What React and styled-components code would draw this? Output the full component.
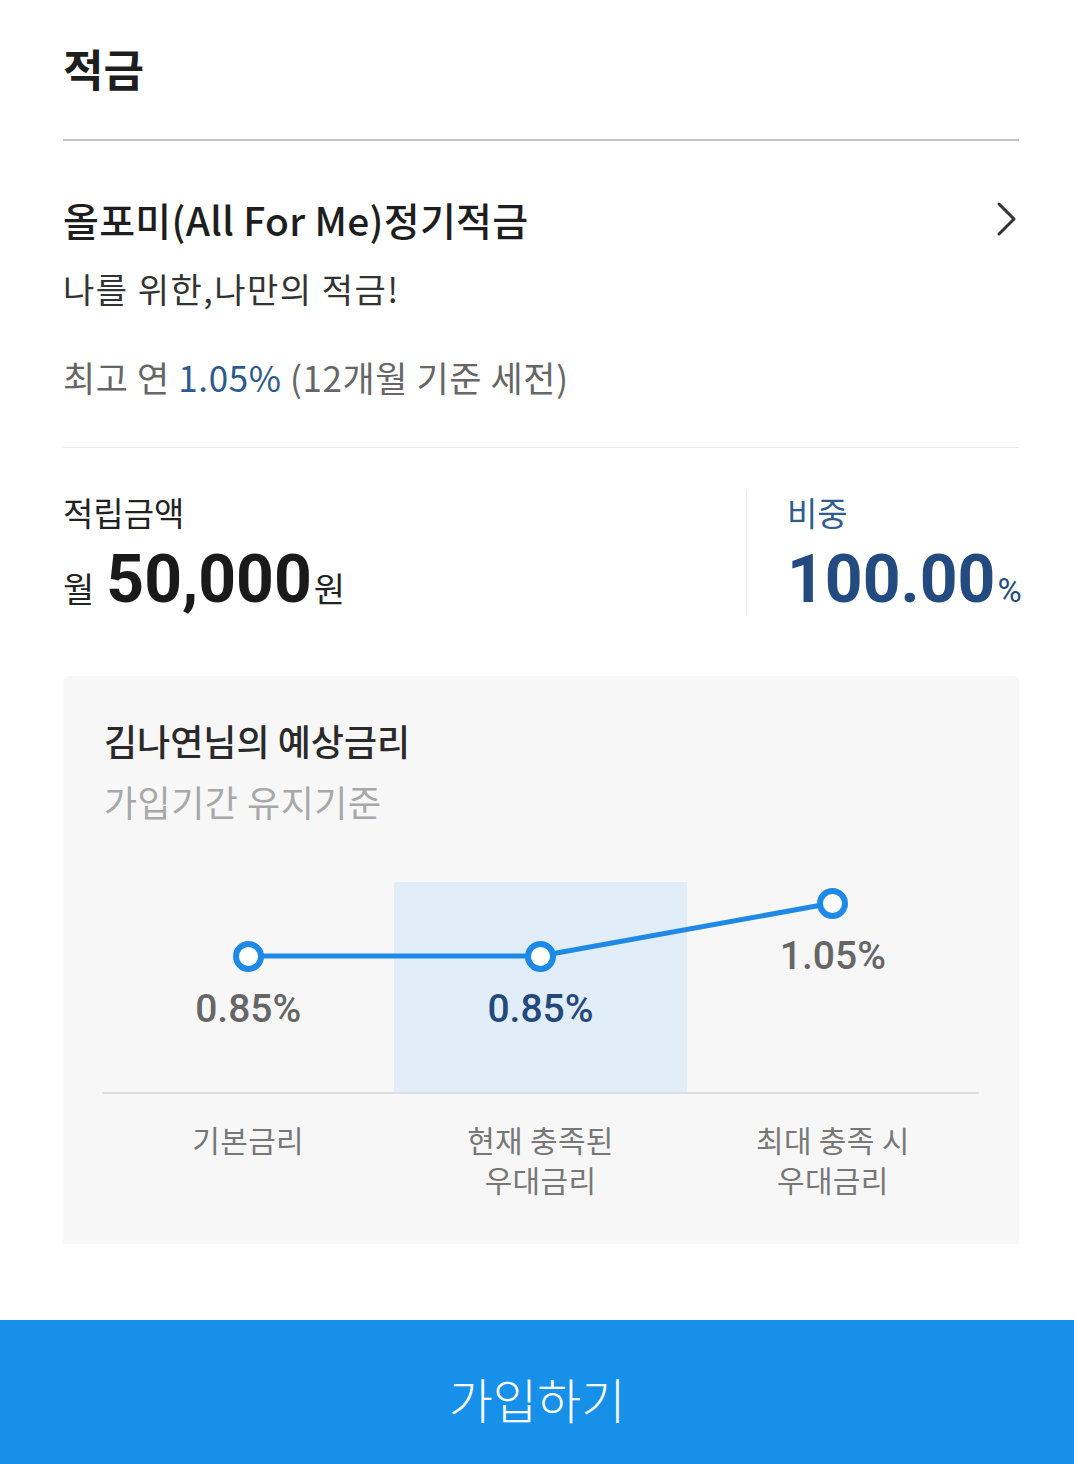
import styled, { createGlobalStyle } from "styled-components";

const GlobalStyle = createGlobalStyle`
  html, body {
    margin: 0;
    padding: 0;
    background: #fff;
  }
  body {
    font-family: "Noto Sans CJK KR", "Noto Sans", sans-serif;
    color: #222;
  }
`;

const NUM_FONT = `Roboto, "Noto Sans CJK KR", sans-serif`;

// 차트 데이터
const rates = [
  { label: ["기본금리"], value: "0.85%", top: 59, current: false },
  { label: ["현재 충족된", "우대금리"], value: "0.85%", top: 59, current: true },
  { label: ["최대 충족 시", "우대금리"], value: "1.05%", top: 6, current: false },
];

function App() {
  return (
    <Screen>
      <GlobalStyle />
      <Content>
        <PageHeader>
          <PageTitle>적금</PageTitle>
        </PageHeader>

        <ProductSection>
          <ProductRow>
            <ProductName>올포미(All For Me)정기적금</ProductName>
            <Chevron width="22" height="36" viewBox="0 0 22 36">
              <polyline points="3,3 18,18 3,33" />
            </Chevron>
          </ProductRow>
          <ProductDesc>나를 위한,나만의 적금!</ProductDesc>
          <RateLine>
            최고 연 <RateHighlight>1.05%</RateHighlight> (12개월 기준 세전)
          </RateLine>
        </ProductSection>

        <AmountSection>
          <AmountCol>
            <AmountLabel>적립금액</AmountLabel>
            <AmountValue>
              <Unit>월</Unit>
              <BigNumber>50,000</BigNumber>
              <Unit tight>원</Unit>
            </AmountValue>
          </AmountCol>
          <RatioCol>
            <RatioLabel>비중</RatioLabel>
            <AmountValue>
              <BigNumber blue>100.00</BigNumber>
              <Percent>%</Percent>
            </AmountValue>
          </RatioCol>
        </AmountSection>

        <RateCard>
          <CardTitle>김나연님의 예상금리</CardTitle>
          <CardSub>가입기간 유지기준</CardSub>

          <Plot>
            <LineLayer width="877" height="210" viewBox="0 0 877 210">
              <polyline points="146,74 438,74 731,21" />
            </LineLayer>
            {rates.map((r, i) => (
              <PlotCol key={i} $current={r.current} $top={r.top}>
                <Dot />
                <PlotValue $current={r.current}>{r.value}</PlotValue>
              </PlotCol>
            ))}
          </Plot>
          <Axis>
            {rates.map((r, i) => (
              <AxisLabel key={i}>
                {r.label.map((line) => (
                  <div key={line}>{line}</div>
                ))}
              </AxisLabel>
            ))}
          </Axis>
        </RateCard>
      </Content>

      <JoinButton>가입하기</JoinButton>
    </Screen>
  );
}

export default App;

const Screen = styled.div`
  display: flex;
  flex-direction: column;
  min-height: 1464px;
  background: #fff;
`;

const Content = styled.div`
  flex: 1;
  padding: 0 55px 0 63px;
`;

const PageHeader = styled.header`
  box-sizing: border-box;
  height: 141px;
  padding-top: 42px;
  border-bottom: 2px solid #c4c4c4;
`;

const PageTitle = styled.h1`
  margin: 0;
  font-size: 44px;
  line-height: 52px;
  font-weight: 700;
  color: #1e1e1e;
`;

const ProductSection = styled.section`
  padding-top: 54px;
  padding-bottom: 48px;
  border-bottom: 1px solid #ececec;
`;

const ProductRow = styled.div`
  display: flex;
  align-items: center;
  justify-content: space-between;
`;

const ProductName = styled.h2`
  margin: 0;
  font-size: 39px;
  line-height: 48px;
  font-weight: 500;
  color: #1e1e1e;
  letter-spacing: 0.3px;
`;

const Chevron = styled.svg`
  margin-right: 1px;
  fill: none;
  stroke: #333;
  stroke-width: 3;
  stroke-linecap: round;
  stroke-linejoin: round;
`;

const ProductDesc = styled.p`
  margin: 24px 0 0;
  font-size: 34px;
  line-height: 44px;
  color: #333;
  letter-spacing: 1.5px;
`;

const RateLine = styled.p`
  margin: 44px 0 0;
  font-size: 35px;
  line-height: 44px;
  color: #666;
  letter-spacing: 0.6px;
`;

const RateHighlight = styled.span`
  color: #2b5a8f;
`;

const AmountSection = styled.section`
  display: flex;
  padding-top: 42px;
  padding-bottom: 60px;
`;

const AmountCol = styled.div`
  flex: 1;
  border-right: 1px solid #ececec;
`;

const RatioCol = styled.div`
  width: 232px;
  padding-left: 40px;
`;

const AmountLabel = styled.div`
  font-size: 33px;
  line-height: 44px;
  color: #222;
`;

const RatioLabel = styled(AmountLabel)`
  color: #2f5d91;
`;

const AmountValue = styled.div`
  display: flex;
  align-items: baseline;
  height: 72px;
  margin-top: 10px;
`;

const Unit = styled.span`
  font-size: 34px;
  color: #222;
  margin-right: ${(p) => (p.tight ? "0" : "12px")};
  margin-left: ${(p) => (p.tight ? "2px" : "0")};
`;

const BigNumber = styled.span`
  font-family: ${NUM_FONT};
  font-size: 66px;
  line-height: 72px;
  font-weight: 700;
  color: ${(p) => (p.blue ? "#234b7f" : "#1a1a1a")};
`;

const Percent = styled.span`
  font-family: ${NUM_FONT};
  font-size: 33px;
  color: #234b7f;
  margin-left: 2px;
`;

const RateCard = styled.section`
  background: #f7f7f7;
  border-radius: 6px 6px 0 0;
  padding: 40px 40px 45px 39px;
`;

const CardTitle = styled.h3`
  margin: 0 0 0 2px;
  font-size: 36px;
  line-height: 48px;
  font-weight: 500;
  color: #2a2a2a;
`;

const CardSub = styled.div`
  margin: 14px 0 0 2px;
  font-size: 36px;
  line-height: 46px;
  color: #a8a8a8;
  letter-spacing: 0.5px;
`;

const Plot = styled.div`
  position: relative;
  display: grid;
  grid-template-columns: repeat(3, 1fr);
  height: 210px;
  margin-top: 58px;
  border-bottom: 2px solid #dedede;
`;

const LineLayer = styled.svg`
  position: absolute;
  left: 0;
  top: 0;
  z-index: 1;
  fill: none;
  stroke: #1e8ae6;
  stroke-width: 5;
  stroke-linejoin: round;
`;

const PlotCol = styled.div`
  display: flex;
  flex-direction: column;
  align-items: center;
  padding-top: ${(p) => p.$top}px;
  background: ${(p) => (p.$current ? "#e1edf8" : "transparent")};
`;

const Dot = styled.div`
  position: relative;
  z-index: 2;
  box-sizing: border-box;
  width: 31px;
  height: 31px;
  border-radius: 50%;
  border: 6px solid #1e8ae6;
  background: #fff;
`;

const PlotValue = styled.div`
  margin-top: 15px;
  font-family: ${NUM_FONT};
  font-size: 39px;
  line-height: 44px;
  font-weight: 500;
  color: ${(p) => (p.$current ? "#24497c" : "#666")};
`;

const Axis = styled.div`
  display: grid;
  grid-template-columns: repeat(3, 1fr);
  padding-top: 25px;
`;

const AxisLabel = styled.div`
  text-align: center;
  font-size: 30px;
  line-height: 40px;
  color: #777;
  letter-spacing: 0.3px;
`;

const JoinButton = styled.button`
  height: 144px;
  width: 100%;
  border: 0;
  margin: 0;
  padding: 12px 0 0;
  background: #1790ea;
  color: #fff;
  font-family: "Noto Sans CJK KR", sans-serif;
  font-size: 48px;
  font-weight: 300;
  cursor: pointer;
`;
